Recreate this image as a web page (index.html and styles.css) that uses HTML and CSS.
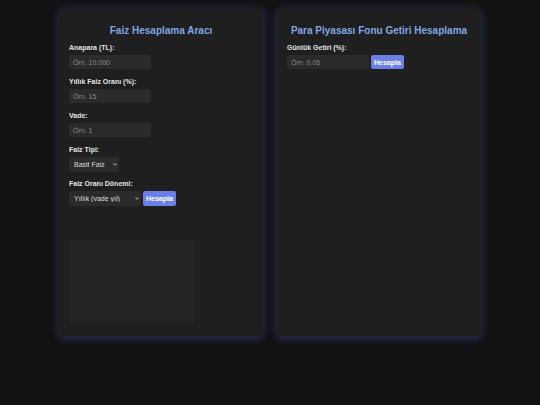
FILE: index.html
```html
<!DOCTYPE html>
<html lang="tr">
<head>
<meta charset="utf-8">
<title>Faiz Hesaplama</title>
<link rel="stylesheet" href="styles.css">
</head>
<body>
<div class="container">
  <div class="card">
    <h2 class="title">Faiz Hesaplama Aracı</h2>
    <label class="label" for="anapara">Anapara (TL):</label>
    <input class="field" id="anapara" type="text" placeholder="Örn. 10.000">
    <label class="label" for="oran">Yıllık Faiz Oranı (%):</label>
    <input class="field" id="oran" type="text" placeholder="Örn. 15">
    <label class="label" for="vade">Vade:</label>
    <input class="field" id="vade" type="text" placeholder="Örn. 1">
    <label class="label" for="tip">Faiz Tipi:</label>
    <div class="row spaced">
      <span class="select-wrap">
        <select class="picker" id="tip">
          <option>Basit Faiz</option>
          <option>Bileşik Faiz</option>
        </select>
        <svg class="chev" width="4" height="3" viewBox="0 0 4 3"><path d="M0.4 0.5 L2 2.2 L3.6 0.5" fill="none" stroke="#dddddd" stroke-width="0.8"/></svg>
      </span>
    </div>
    <label class="label" for="donem">Faiz Oranı Dönemi:</label>
    <div class="row">
      <span class="select-wrap">
        <select class="picker" id="donem">
          <option>Yıllık (vade yıl)</option>
          <option>Aylık (vade ay)</option>
          <option>Günlük (vade gün)</option>
        </select>
        <svg class="chev" width="4" height="3" viewBox="0 0 4 3"><path d="M0.4 0.5 L2 2.2 L3.6 0.5" fill="none" stroke="#dddddd" stroke-width="0.8"/></svg>
      </span>
      <button class="btn" type="button">Hesapla</button>
    </div>
    <div class="chart"></div>
  </div>
  <div class="card">
    <h2 class="title">Para Piyasası Fonu Getiri Hesaplama</h2>
    <label class="label" for="getiri">Günlük Getiri (%):</label>
    <div class="row">
      <input class="field inline" id="getiri" type="text" placeholder="Örn. 0.05">
      <button class="btn" type="button">Hesapla</button>
    </div>
  </div>
</div>
</body>
</html>
```

FILE: styles.css
```css
html, body {
  margin: 0;
  padding: 0;
  background: #121212;
  height: 100%;
}

body {
  font-family: "Liberation Sans", Arial, sans-serif;
  color: #e0e0e0;
}

.container {
  display: flex;
  justify-content: center;
  align-items: stretch;
  gap: 14px;
  padding-top: 8px;
}

.card {
  width: 204px;
  box-sizing: border-box;
  padding: 10px;
  background: #1f1f1f;
  border-radius: 5px;
  box-shadow: 0 2px 9px 1px rgba(90, 100, 220, 0.33);
}

.title {
  font-size: 10px;
  line-height: 12px;
  font-weight: bold;
  color: #7ea8e4;
  text-align: center;
  margin: 7px 0 7px;
}

.label {
  display: block;
  font-size: 7px;
  line-height: 8px;
  font-weight: bold;
  color: #e4e4e4;
  margin-bottom: 3px;
}

.field {
  display: block;
  box-sizing: border-box;
  width: 82px;
  height: 14px;
  padding: 0 4px;
  margin: 0 0 9px;
  border: none;
  border-radius: 2px;
  background: #2b2b2b;
  color: #e0e0e0;
  font-family: inherit;
  font-size: 7px;
  outline: none;
}

.field::placeholder {
  color: #8a8a8a;
}

.field.inline {
  margin: 0;
}

.select-wrap {
  position: relative;
  display: inline-flex;
}

.picker {
  -webkit-appearance: none;
  appearance: none;
  box-sizing: border-box;
  height: 15px;
  padding: 0 9px 0 5px;
  border: none;
  border-radius: 2px;
  background: #2b2b2b;
  color: #dddddd;
  font-family: inherit;
  font-size: 7px;
  outline: none;
}

.chev {
  position: absolute;
  right: 2px;
  top: 6px;
  pointer-events: none;
}

.row {
  display: flex;
  align-items: stretch;
  gap: 2px;
}

.row.spaced {
  margin-bottom: 8px;
}

.btn {
  box-sizing: border-box;
  padding: 0 3px;
  border: none;
  border-radius: 2px;
  background: #6b7fe8;
  color: #ffffff;
  font-family: inherit;
  font-size: 7px;
  font-weight: bold;
  cursor: pointer;
}

.chart {
  width: 126px;
  height: 84px;
  margin-top: 34px;
  margin-bottom: 2px;
  background: #242424;
  border-radius: 3px;
}
```
